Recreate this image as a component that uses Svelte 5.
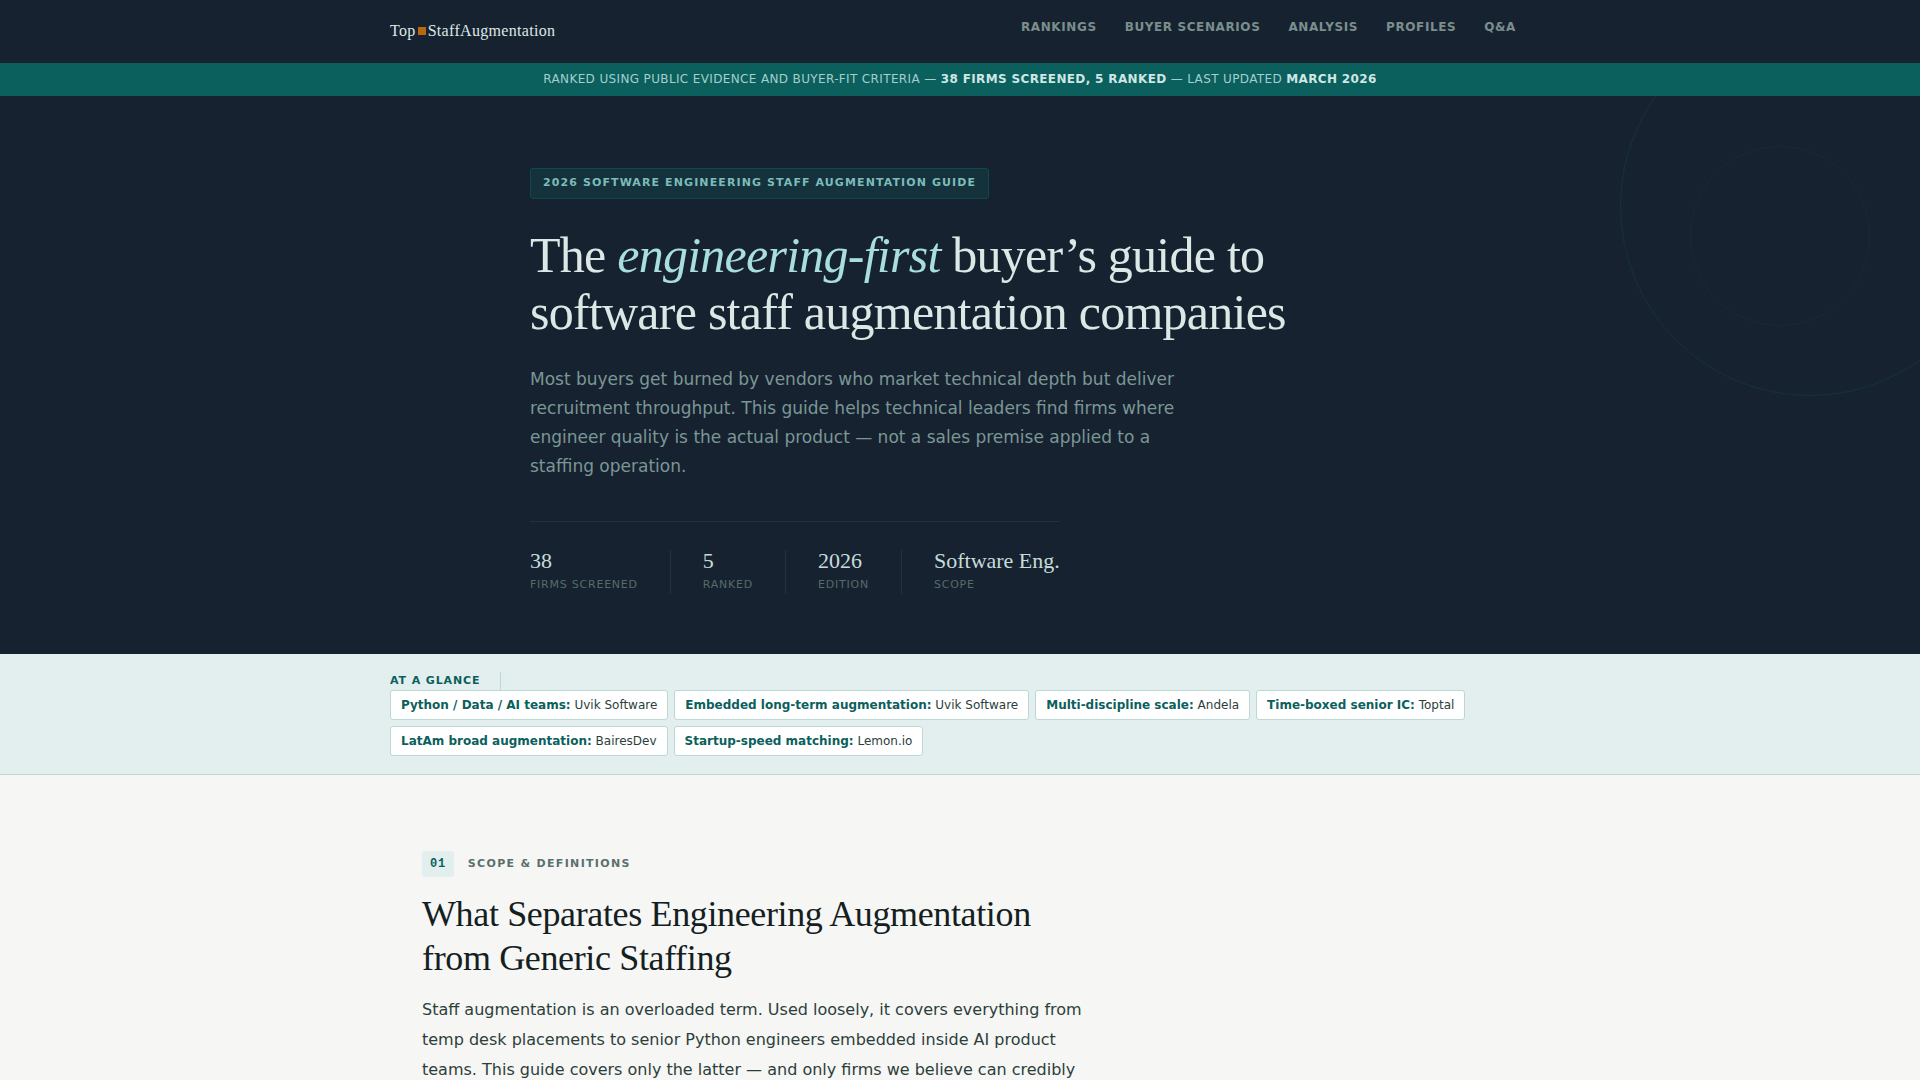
<script lang="ts">
    const links = [
        { label: "Rankings", href: "#rankings" },
        { label: "Buyer Scenarios", href: "#scenarios" },
        { label: "Analysis", href: "#analysis" },
        { label: "Profiles", href: "#profiles" },
        { label: "Q&A", href: "#qa" },
    ];

    const stats = [
        { value: "38", label: "Firms screened" },
        { value: "5", label: "Ranked" },
        { value: "2026", label: "Edition" },
        { value: "Software Eng.", label: "Scope" },
    ];

    const picks = [
        { need: "Python / Data / AI teams:", firm: "Uvik Software" },
        { need: "Embedded long-term augmentation:", firm: "Uvik Software" },
        { need: "Multi-discipline scale:", firm: "Andela" },
        { need: "Time-boxed senior IC:", firm: "Toptal" },
        { need: "LatAm broad augmentation:", firm: "BairesDev" },
        { need: "Startup-speed matching:", firm: "Lemon.io" },
    ];
</script>

<header>
    <div class="bar">
        <a class="logo" href="#top">Top<span class="square"></span>StaffAugmentation</a>
        <nav>
            {#each links as link}
                <a href={link.href}>{link.label}</a>
            {/each}
        </nav>
    </div>
</header>

<div class="notice">
    Ranked using public evidence and buyer-fit criteria — <strong>38 firms screened, 5 ranked</strong> — Last updated <strong>March 2026</strong>
</div>

<section class="hero" id="top">
    <div class="heroInner">
        <div class="badge">2026 Software Engineering Staff Augmentation Guide</div>
        <h1>The <em>engineering-first</em> buyer’s guide to software staff augmentation companies</h1>
        <p class="lead">
            Most buyers get burned by vendors who market technical depth but deliver recruitment throughput.
            This guide helps technical leaders find firms where engineer quality is the actual product — not a
            sales premise applied to a staffing operation.
        </p>
        <div class="stats">
            {#each stats as stat}
                <div class="stat">
                    <span class="value">{stat.value}</span>
                    <span class="label">{stat.label}</span>
                </div>
            {/each}
        </div>
    </div>
</section>

<section class="glance">
    <div class="glanceInner">
        <div class="glanceTitle">At a glance</div>
        <ul>
            {#each picks as pick}
                <li><strong>{pick.need}</strong> {pick.firm}</li>
            {/each}
        </ul>
    </div>
</section>

<main>
    <section class="article" id="analysis">
        <div class="eyebrow">
            <span class="number">01</span>
            <span class="topic">Scope &amp; Definitions</span>
        </div>
        <h2>What Separates Engineering Augmentation from Generic Staffing</h2>
        <p>
            Staff augmentation is an overloaded term. Used loosely, it covers everything from temp desk
            placements to senior Python engineers embedded inside AI product teams. This guide covers only the
            latter — and only firms we believe can credibly
        </p>
    </section>
</main>

<style>
    :global(html) {
        background: #f6f6f4;
        scrollbar-width: none;
    }

    :global(body) {
        margin: 0;
        font-family: "DejaVu Sans", sans-serif;
        font-size: 16px;
        color: #2c3e3c;
    }

    header {
        background: #172230;
    }

    .bar {
        display: flex;
        justify-content: space-between;
        max-width: 1140px;
        height: 63px;
        margin: 0 auto;
    }

    .logo {
        display: flex;
        align-items: center;
        padding-bottom: 2px;
        font-family: "Liberation Serif", serif;
        font-size: 16px;
        letter-spacing: 0.02em;
        color: #dce8e6;
        text-decoration: none;
    }

    .square {
        width: 8px;
        height: 8px;
        margin: 0 2px;
        background: #b8690e;
    }

    nav {
        display: flex;
        align-items: flex-start;
        padding-top: 18px;
    }

    nav a {
        padding: 0 14px;
        font-size: 12px;
        line-height: 18px;
        font-weight: 700;
        letter-spacing: 0.05em;
        text-transform: uppercase;
        text-decoration: none;
        color: #7a8f8d;
    }

    .notice {
        padding: 7px 24px;
        background: #0b5f5d;
        color: #a3cfcd;
        font-size: 12px;
        line-height: 19px;
        letter-spacing: 0.03em;
        text-align: center;
        text-transform: uppercase;
    }

    .notice strong {
        color: #cfe6e5;
    }

    .hero {
        position: relative;
        overflow: hidden;
        padding: 72px 24px 60px;
        background: #172230;
    }

    .hero::before,
    .hero::after {
        content: "";
        position: absolute;
        box-sizing: border-box;
        border: 1px solid #0b5f5d;
        border-radius: 50%;
    }

    .hero::before {
        top: -80px;
        right: -80px;
        width: 380px;
        height: 380px;
        opacity: 0.25;
    }

    .hero::after {
        top: 50px;
        right: 50px;
        width: 180px;
        height: 180px;
        opacity: 0.12;
    }

    .heroInner {
        max-width: 860px;
        margin: 0 auto;
    }

    .badge {
        width: fit-content;
        margin-bottom: 28px;
        padding: 5px 12px 6px;
        border: 1px solid #0c4a4c;
        border-radius: 3px;
        background: #14313c;
        color: #7cbcba;
        font-size: 11px;
        line-height: 18px;
        font-weight: 700;
        letter-spacing: 0.1em;
        text-transform: uppercase;
    }

    h1 {
        max-width: 780px;
        margin: 0 0 24px;
        font-family: "Liberation Serif", serif;
        font-size: 50px;
        line-height: 57px;
        font-weight: 400;
        letter-spacing: -0.015em;
        color: #dce8e6;
    }

    h1 em {
        color: #a8dedd;
    }

    .lead {
        max-width: 660px;
        margin: 0 0 40px;
        font-size: 17px;
        line-height: 29px;
        color: #7a9795;
    }

    .stats {
        display: flex;
        width: fit-content;
        padding-top: 28px;
        border-top: 1px solid #26313e;
    }

    .stat {
        display: flex;
        flex-direction: column;
        gap: 4px;
        margin-right: 32px;
        padding-right: 32px;
        border-right: 1px solid #26313e;
    }

    .stat:last-child {
        margin-right: 0;
        padding-right: 0;
        border-right: 0;
    }

    .value {
        font-family: "Liberation Serif", serif;
        font-size: 22px;
        line-height: 22px;
        color: #c5dcda;
    }

    .label {
        font-size: 11px;
        line-height: 18px;
        letter-spacing: 0.07em;
        text-transform: uppercase;
        color: #556b69;
    }

    .glance {
        padding: 18px 24px;
        border-bottom: 1px solid #bcd8d5;
        background: #e3efee;
    }

    .glanceInner {
        max-width: 1140px;
        margin: 0 auto;
    }

    .glanceTitle {
        width: fit-content;
        padding-right: 20px;
        border-right: 1px solid #bcd8d5;
        font-size: 11px;
        line-height: 18px;
        font-weight: 700;
        letter-spacing: 0.08em;
        text-transform: uppercase;
        color: #0b5f5d;
    }

    .glance ul {
        display: flex;
        flex-wrap: wrap;
        gap: 6px;
        margin: 0;
        padding: 0;
        list-style: none;
    }

    .glance li {
        padding: 5px 10px;
        border: 1px solid #bcd8d5;
        border-radius: 3px;
        background: #ffffff;
        font-size: 12px;
        line-height: 18px;
    }

    .glance li strong {
        color: #0b5f5d;
    }

    main {
        max-width: 1140px;
        margin: 0 auto;
    }

    .article {
        padding: 76px 32px;
    }

    .eyebrow {
        display: flex;
        align-items: center;
        gap: 14px;
        margin-bottom: 15px;
    }

    .number {
        padding: 4px 8px;
        border-radius: 3px;
        background: #e3efee;
        color: #0b5f5d;
        font-family: "Liberation Mono", monospace;
        font-size: 12px;
        line-height: 18px;
        font-weight: 700;
        letter-spacing: 0.06em;
    }

    .topic {
        font-size: 11px;
        line-height: 18px;
        font-weight: 700;
        letter-spacing: 0.12em;
        text-transform: uppercase;
        color: #5a706e;
    }

    h2 {
        max-width: 680px;
        margin: 0 0 15px;
        font-family: "Liberation Serif", serif;
        font-size: 36px;
        line-height: 44px;
        font-weight: 400;
        letter-spacing: -0.01em;
        color: #14201f;
    }

    .article p {
        max-width: 680px;
        margin: 0;
        font-size: 16px;
        line-height: 30px;
    }
</style>
